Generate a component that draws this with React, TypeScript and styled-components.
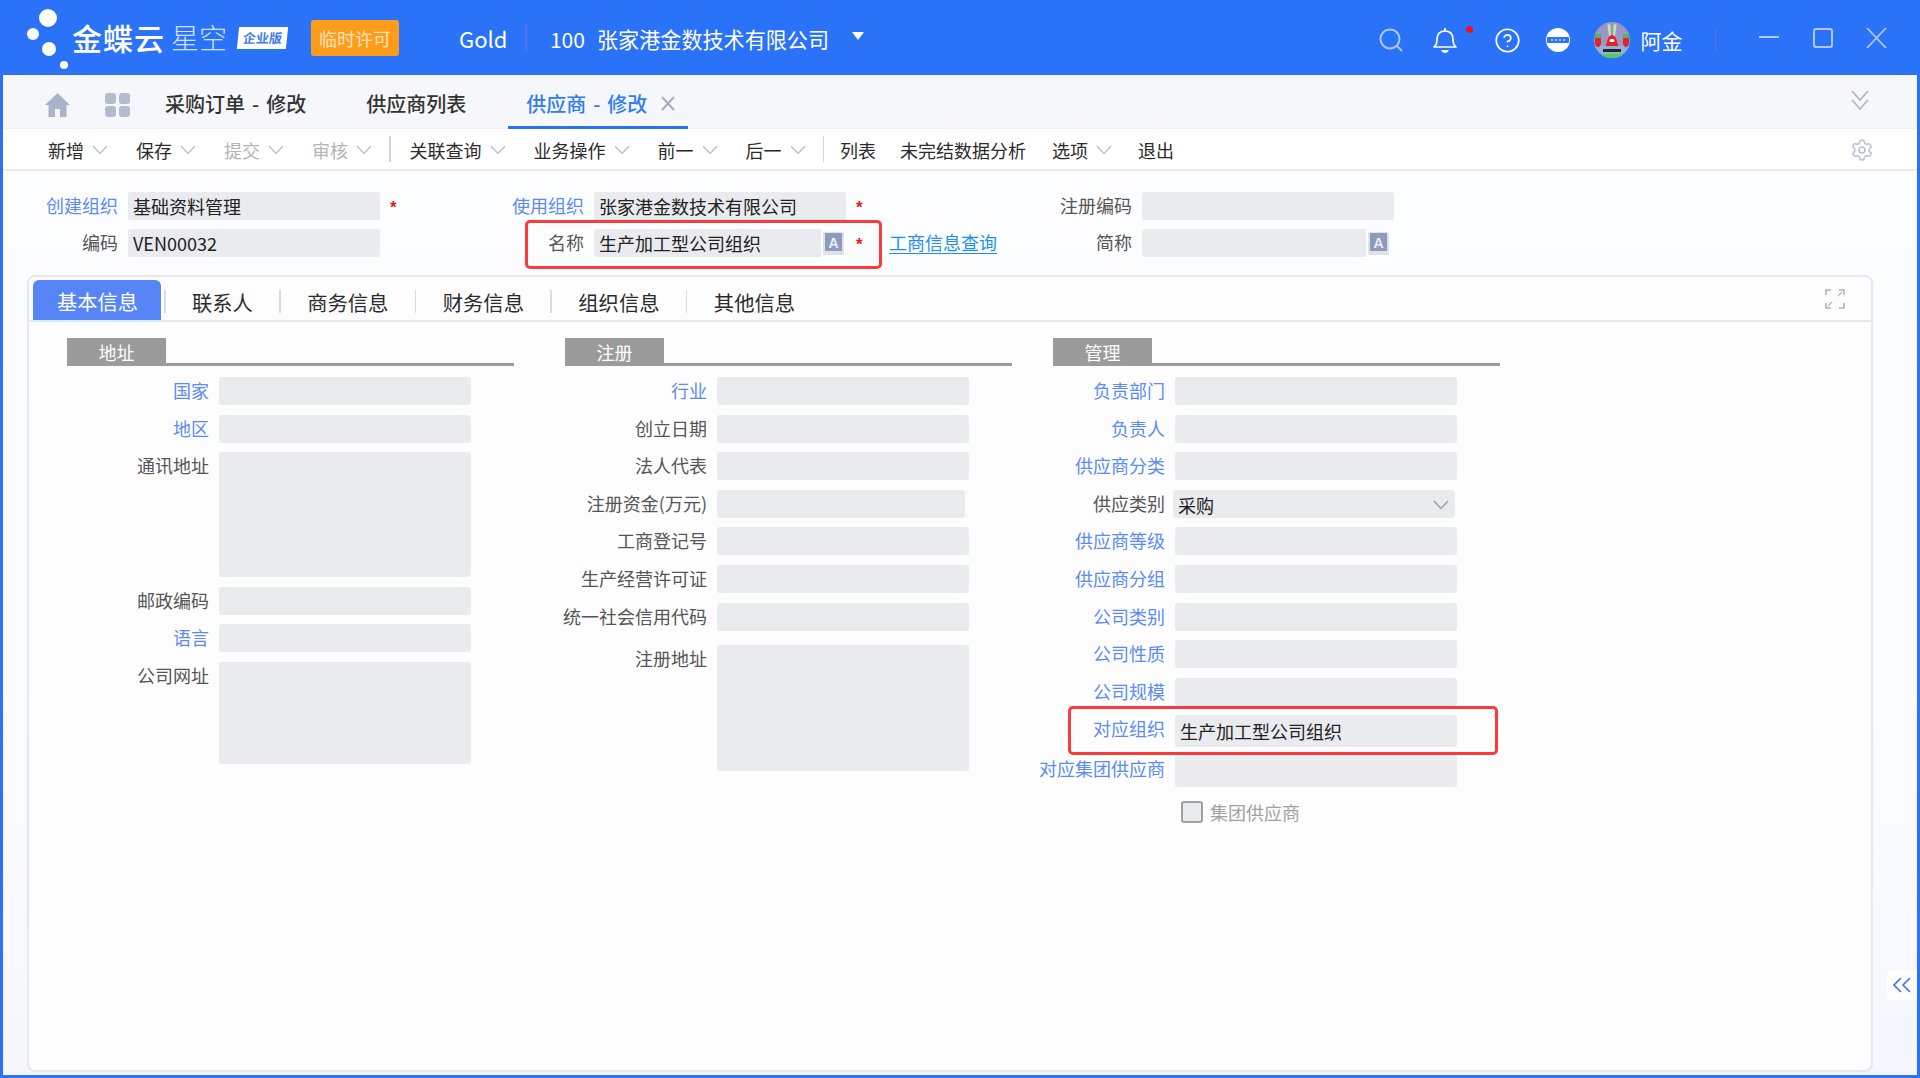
import React from 'react';
import styled, { createGlobalStyle } from 'styled-components';
import { CircleHelp, Settings } from 'lucide-react';

const GlobalStyle = createGlobalStyle`
  html, body {
    margin: 0;
    padding: 0;
    background: #2a72f8;
  }
  * {
    box-sizing: border-box;
  }
  body {
    font-family: "Noto Sans CJK SC", "Noto Sans", "Liberation Sans", sans-serif;
  }
`;

const Page = styled.div`
  width: 1920px;
  height: 1078px;
  display: flex;
  flex-direction: column;
  overflow: hidden;
  background: #2a72f8;
  position: relative;
`;

const Header = styled.header`
  height: 75px;
  flex: none;
  display: flex;
  align-items: center;
  color: #fff;
`;

const LogoMark = styled.svg`
  width: 72px;
  height: 75px;
  flex: none;
`;

const LogoBrand = styled.span`
  font-size: 30px;
  line-height: 36px;
  font-weight: 500;
  width: 99px;
  letter-spacing: 1px;
  white-space: nowrap;
  margin-top: -2px;
`;

const LogoProduct = styled.span`
  font-size: 28px;
  line-height: 36px;
  font-weight: 300;
  width: 67px;
  opacity: 0.78;
  white-space: nowrap;
  margin-top: -2px;
`;

const LogoBadge = styled.span`
  width: 49px;
  height: 22px;
  background: #fff;
  color: #3f7ef0;
  font-size: 13px;
  font-weight: 700;
  line-height: 22px;
  text-align: center;
  transform: skewX(-6deg);
  white-space: nowrap;
`;

const LicenseChip = styled.span`
  width: 88px;
  height: 36px;
  margin-left: 24px;
  background: #ff9c1c;
  border-radius: 3px;
  color: #ffe3bd;
  font-size: 18px;
  line-height: 36px;
  text-align: center;
  white-space: nowrap;
`;

const TenantName = styled.span`
  margin-left: 60px;
  font-size: 22px;
  line-height: 30px;
`;

const HeaderDivider = styled.span<{ $left: number; $right: number }>`
  width: 1.5px;
  height: 25px;
  background: #5e6fe6;
  margin: 0 ${p => p.$right}px 0 ${p => p.$left}px;
  flex: none;
`;

const CompanyName = styled.span`
  font-size: 21.1px;
  line-height: 32px;
  white-space: nowrap;
  margin-top: 2px;
`;

const CompanyCode = styled(CompanyName)`
  margin-right: 12px;
`;

const CaretDown = styled.span`
  width: 0;
  height: 0;
  margin-left: 23px;
  margin-top: -4px;
  border-left: 6.5px solid transparent;
  border-right: 6.5px solid transparent;
  border-top: 8px solid #fff;
`;

const HeaderTools = styled.div`
  margin-left: auto;
  display: flex;
  align-items: center;
  height: 100%;
  padding: 5px 33px 0 0;
`;

const ToolIcon = styled.svg<{ $ml: number; $dim?: boolean }>`
  margin-left: ${p => p.$ml}px;
  flex: none;
  display: block;
  opacity: ${p => (p.$dim ? 0.62 : 1)};
`;

const WindowControls = styled.div`
  display: flex;
  align-items: center;
  margin-top: -5px;
`;

const BellWrap = styled.span`
  position: relative;
  display: block;
  margin-left: 30px;
  height: 26px;
`;

const BellDot = styled.span`
  position: absolute;
  left: 33px;
  top: -1px;
  width: 7px;
  height: 7px;
  border-radius: 50%;
  background: #f30f0f;
`;

const HelpIcon = styled(CircleHelp)`
  margin-left: 37px;
  flex: none;
`;

const UserName = styled.span`
  margin-left: 11px;
  font-size: 21px;
  line-height: 30px;
  white-space: nowrap;
`;

const Body = styled.div`
  flex: 1;
  min-height: 0;
  margin: 0 3px 3px;
  background: linear-gradient(#fcfdff, #fbfcff 60%, #f5f7fd);
  display: flex;
  flex-direction: column;
  position: relative;
`;

const TabBar = styled.nav`
  height: 54px;
  flex: none;
  background: #f5f7fb;
  display: flex;
  align-items: stretch;
  padding-left: 42px;
`;

const NavIcons = styled.div`
  display: flex;
  align-items: center;
  gap: 35px;
  margin-right: 17px;
  padding-top: 6px;
`;

const PageTab = styled.div<{ $active?: boolean }>`
  padding: 6px ${p => (p.$active ? 13 : 18)}px 0 18px;
  margin-right: 24px;
  display: flex;
  align-items: center;
  gap: 14px;
  font-size: 20px;
  line-height: 28px;
  font-weight: 500;
  word-spacing: 2.5px;
  white-space: nowrap;
  color: ${p => (p.$active ? '#2f7cf6' : '#333')};
  border-bottom: 3px solid ${p => (p.$active ? '#2a72f8' : 'transparent')};
`;

const TabClose = styled.svg`
  display: block;
  flex: none;
`;

const CollapseTabs = styled.svg`
  margin-left: auto;
  margin-right: 47px;
  margin-top: 16px;
  flex: none;
`;

const Toolbar = styled.div`
  height: 40px;
  flex: none;
  background: #fff;
  display: flex;
  align-items: center;
  padding: 2px 0 0 45px;
  box-shadow: 0 1px 3px rgba(120, 130, 160, 0.28);
  position: relative;
`;

const ToolItem = styled.div<{ $gap?: number; $disabled?: boolean }>`
  display: flex;
  align-items: center;
  gap: 8px;
  margin-right: ${p => p.$gap ?? 28}px;
  font-size: 18px;
  line-height: 26px;
  white-space: nowrap;
  color: ${p => (p.$disabled ? '#b4b4b4' : '#2b2b2b')};
`;

const ToolSep = styled.span<{ $after: number }>`
  width: 1.5px;
  height: 26px;
  background: #cfd6e4;
  margin-left: -11px;
  margin-right: ${p => p.$after}px;
  margin-top: -2px;
  flex: none;
`;

const ToolGear = styled(Settings)`
  margin-left: auto;
  margin-right: 43px;
  margin-top: -1px;
`;

const TopForm = styled.section`
  position: relative;
  display: grid;
  grid-template-columns: 125px 252px 132px 82px 252px 214px 82px 252px;
  grid-auto-rows: 28px;
  row-gap: 9px;
  padding-top: 23px;
  height: 106px;
  flex: none;
`;

const FieldLabel = styled.label<{ $link?: boolean; $width?: number }>`
  display: flex;
  justify-content: flex-end;
  font-size: 18px;
  line-height: 26px;
  height: 28px;
  padding-right: 10px;
  white-space: nowrap;
  flex: none;
  width: ${p => (p.$width ? `${p.$width}px` : 'auto')};
  color: ${p => (p.$link ? '#5c8bf5' : '#555')};
`;

const InputBox = styled.div<{ $width?: number; $height?: number }>`
  position: relative;
  width: ${p => (p.$width ? `${p.$width}px` : '100%')};
  height: ${p => (p.$height ? `${p.$height}px` : '28px')};
  background: #e9ebef;
  border-radius: 3px;
  padding: 0 5px;
  font-size: 18px;
  line-height: 28px;
  color: #222;
  white-space: nowrap;
  flex: none;
`;

const FormValue = styled(InputBox)`
  padding-top: 2px;
`;

const LangIcon = styled.svg`
  position: absolute;
  right: 0;
  top: 0;
`;

const StarCell = styled.div`
  display: flex;
  align-items: center;
  gap: 27px;
  padding-left: 10px;
`;

const Star = styled.span`
  width: 6px;
  color: #f01414;
  font-family: "Liberation Sans", sans-serif;
  font-size: 17px;
  font-weight: 700;
  line-height: 28px;
  padding-top: 3px;
`;

const InfoLink = styled.a`
  font-size: 18px;
  line-height: 24px;
  color: #1f8fef;
  text-decoration: underline;
  text-underline-offset: 3px;
  white-space: nowrap;
  margin-top: -2px;
`;

const NameHighlight = styled.div`
  position: absolute;
  left: 522px;
  top: 51px;
  width: 357px;
  height: 49px;
  border: 3.5px solid #fb3b3b;
  border-radius: 5px;
  pointer-events: none;
`;

const Panel = styled.section`
  flex: 1;
  min-height: 0;
  margin: 0 44px 3px 24px;
  border: 2px solid #e4e8f1;
  border-radius: 8px;
  background: #fdfdfe;
  display: flex;
  flex-direction: column;
`;

const PanelTabs = styled.div`
  height: 45px;
  flex: none;
  display: flex;
  align-items: flex-end;
  padding-left: 4px;
  border-bottom: 2px solid #e4e8f1;
`;

const PanelTab = styled.div`
  height: 40px;
  padding: 0 26.4px 0 28px;
  font-size: 20.3px;
  line-height: 44px;
  white-space: nowrap;
  position: relative;
  color: #2b2b2b;
  &::before {
    content: "";
    position: absolute;
    left: 0;
    top: 10px;
    bottom: 7px;
    width: 1.5px;
    background: #d6dce8;
  }
`;

const ActiveTab = styled.div`
  height: 40px;
  width: 128px;
  margin-right: 3px;
  padding-left: 24px;
  font-size: 20.3px;
  line-height: 42px;
  white-space: nowrap;
  border-radius: 6px 6px 0 0;
  background: #5585f6;
  color: #fff;
`;

const ExpandIcon = styled.svg`
  margin-left: auto;
  margin-right: 26px;
  align-self: flex-start;
  margin-top: 12px;
`;

const PanelBody = styled.div`
  display: flex;
  padding: 16px 0 0 38px;
  align-items: flex-start;
`;

const Section = styled.div<{ $mr: number }>`
  width: 447px;
  flex: none;
  margin-right: ${p => p.$mr}px;
  position: relative;
`;

const SectionHead = styled.div`
  height: 28px;
  border-bottom: 3px solid #9b9b9b;
  margin-bottom: 11px;
`;

const SectionTitle = styled.div`
  width: 99px;
  height: 28px;
  background: #9b9b9b;
  color: #fff;
  font-size: 18px;
  line-height: 28px;
  text-align: center;
`;

const FieldList = styled.div`
  display: flex;
  flex-direction: column;
  gap: 9.6px;
`;

const FieldRow = styled.div<{ $mt?: number }>`
  display: flex;
  align-items: flex-start;
  margin-top: ${p => p.$mt ?? 0}px;
`;

const SelectBox = styled(FormValue)`
  margin-left: -2px;
  display: flex;
  align-items: center;
  justify-content: space-between;
  padding-right: 6px;
`;

const OrgHighlight = styled.div`
  position: absolute;
  left: 15px;
  top: 368px;
  width: 430px;
  height: 49px;
  border: 3.5px solid #fb3b3b;
  border-radius: 5px;
  pointer-events: none;
`;

const CheckRow = styled.div`
  display: flex;
  align-items: center;
  gap: 7px;
  margin: 12px 0 0 128px;
  font-size: 18px;
  line-height: 26px;
  color: #a2a2a2;
`;

const CheckBox = styled.span`
  width: 22px;
  height: 22px;
  border: 2.5px solid #a0a0a0;
  border-radius: 3px;
  background: #e9ebef;
  flex: none;
`;

const SideHandle = styled.div`
  position: absolute;
  right: 0;
  top: 895px;
  width: 30px;
  height: 30px;
  background: #fff;
  border-radius: 6px 0 0 6px;
  display: flex;
  align-items: center;
  padding-left: 6px;
`;

const Chevron: React.FC<{ color?: string }> = ({ color = '#b9c1d3' }) => (
  <svg width="16" height="10" viewBox="0 0 16 10" fill="none">
    <path d="M1 1l7 7.500L15 1" stroke={color} strokeWidth="1.5" />
  </svg>
);

const LangGlyph: React.FC = () => (
  <LangIcon width="25" height="28" viewBox="0 0 25 28">
    <rect width="25" height="28" fill="#fcfdff" />
    <rect x="2" y="3" width="21" height="23" rx="1" fill="#dfe2ea" />
    <rect x="4" y="4" width="17" height="18" fill="#8f9bbd" />
    <text x="12.500" y="18.500" textAnchor="middle" fontSize="14" fontWeight="700" fill="#e9ecf4" fontFamily="Liberation Sans">
      A
    </text>
  </LangIcon>
);

const KrabsAvatar: React.FC = () => (
  <ToolIcon $ml={24} width="36" height="36" viewBox="0 0 36 36">
    <defs>
      <clipPath id="avatarClip">
        <circle cx="18" cy="18" r="18" />
      </clipPath>
    </defs>
    <g clipPath="url(#avatarClip)">
      <rect width="36" height="36" fill="#9b96c6" />
      <rect y="24" width="36" height="12" fill="#8fb3cf" />
      <path d="M3 32h30v4H3z" fill="#58c95c" />
      <path d="M14.500 2c1.500 0 2 1 2 3l.5 9h-2l-1.500-9c0-2 0-3 1-3zM21.500 2c-1.500 0-2 1-2 3l-.5 9h2l1.500-9c0-2 0-3-1-3z" fill="#bfe8a4" />
      <path d="M18 13c3 0 5 4 6 11H12c1-7 3-11 6-11z" fill="#e2232a" />
      <rect x="15.500" y="17" width="5" height="3" rx="1.500" fill="#fff" />
      <path d="M1 15h6v7l-2 3H3l-2-3zM29 15h6v7l-2 3h-2l-2-3z" fill="#d9272d" />
      <path d="M1 12h6v4H1zM29 12h6v4h-6z" fill="#4fb658" />
      <path d="M9 27h18v3H9z" fill="#23232c" />
    </g>
  </ToolIcon>
);

type FieldDef = {
  label: string;
  link?: boolean;
  height?: number;
  width?: number;
  mt?: number;
  value?: string;
  select?: boolean;
};

const addressFields: FieldDef[] = [
  { label: '国家', link: true },
  { label: '地区', link: true },
  { label: '通讯地址', height: 125 },
  { label: '邮政编码' },
  { label: '语言', link: true },
  { label: '公司网址', height: 102 },
];

const registerFields: FieldDef[] = [
  { label: '行业', link: true },
  { label: '创立日期' },
  { label: '法人代表' },
  { label: '注册资金(万元)', width: 248 },
  { label: '工商登记号' },
  { label: '生产经营许可证' },
  { label: '统一社会信用代码' },
  { label: '注册地址', height: 126, mt: 5 },
];

const manageFields: FieldDef[] = [
  { label: '负责部门', link: true },
  { label: '负责人', link: true },
  { label: '供应商分类', link: true },
  { label: '供应类别', select: true, value: '采购' },
  { label: '供应商等级', link: true },
  { label: '供应商分组', link: true },
  { label: '公司类别', link: true },
  { label: '公司性质', link: true },
  { label: '公司规模', link: true },
  { label: '对应组织', link: true, height: 32, value: '生产加工型公司组织' },
  { label: '对应集团供应商', link: true, height: 32, mt: -2 },
];

const Fields: React.FC<{ fields: FieldDef[]; labelWidth: number; inputWidth: number }> = ({
  fields,
  labelWidth,
  inputWidth,
}) => (
  <FieldList>
    {fields.map(f => (
      <FieldRow key={f.label} $mt={f.mt}>
        <FieldLabel $link={f.link} $width={labelWidth}>
          {f.label}
        </FieldLabel>
        {f.select ? (
          <SelectBox $width={inputWidth}>
            {f.value}
            <Chevron color="#98a0b0" />
          </SelectBox>
        ) : (
          <FormValue $width={f.width ?? inputWidth} $height={f.height}>
            {f.value}
          </FormValue>
        )}
      </FieldRow>
    ))}
  </FieldList>
);

const toolGroupA = [
  { text: '新增' },
  { text: '保存' },
  { text: '提交', disabled: true },
  { text: '审核', disabled: true },
];
const toolGroupB = ['关联查询', '业务操作', '前一', '后一'];

export default function App() {
  return (
    <Page>
      <GlobalStyle />
      <Header>
        <LogoMark viewBox="0 0 72 75" fill="#fff">
          <circle cx="48" cy="18" r="9" />
          <circle cx="33" cy="34" r="6" />
          <circle cx="49" cy="49" r="7" />
          <circle cx="64" cy="65" r="4" />
        </LogoMark>
        <LogoBrand>金蝶云</LogoBrand>
        <LogoProduct>星空</LogoProduct>
        <LogoBadge>企业版</LogoBadge>
        <LicenseChip>临时许可</LicenseChip>
        <TenantName>Gold</TenantName>
        <HeaderDivider $left={18} $right={23} />
        <CompanyCode>100</CompanyCode>
        <CompanyName>张家港金数技术有限公司</CompanyName>
        <CaretDown />
        <HeaderTools>
          <ToolIcon $ml={0} $dim width="24" height="24" viewBox="0 0 24 24" fill="none" stroke="#fff" strokeWidth="2">
            <circle cx="11" cy="11" r="9.5" />
            <path d="M18 18l5 5" />
          </ToolIcon>
          <BellWrap>
            <ToolIcon $ml={0} width="24" height="26" viewBox="0 0 24 26" fill="none" stroke="#fff" strokeWidth="1.7">
              <path d="M1 20h22c-2-2-3-3-3-8 0-5-3-8-8-8s-8 3-8 8c0 5-1 6-3 8z" strokeLinejoin="round" />
              <path d="M12 1v3" />
              <path d="M8 23h8c-1 2-2 3-4 3s-3-1-4-3z" fill="#fff" stroke="none" />
            </ToolIcon>
            <BellDot />
          </BellWrap>
          <HelpIcon size={27} color="#fff" strokeWidth={1.5} />
          <ToolIcon $ml={25} width="24" height="24" viewBox="0 0 24 24">
            <circle cx="12" cy="12" r="12" fill="#fff" />
            <rect x="1" y="9" width="22" height="6" rx="1" fill="#2a72f8" />
            <circle cx="6" cy="12" r="1" fill="#cfe0ff" />
            <circle cx="10" cy="12" r="1" fill="#cfe0ff" />
            <circle cx="14" cy="12" r="1" fill="#cfe0ff" />
            <circle cx="18" cy="12" r="1" fill="#cfe0ff" />
          </ToolIcon>
          <KrabsAvatar />
          <UserName>阿金</UserName>
          <HeaderDivider $left={32} $right={32} />
          <WindowControls>
            <ToolIcon $ml={11} $dim width="20" height="20" viewBox="0 0 20 20" fill="none" stroke="#fff" strokeWidth="2">
              <path d="M0 9h20" />
            </ToolIcon>
            <ToolIcon $ml={34} $dim width="20" height="20" viewBox="0 0 20 20" fill="none" stroke="#fff" strokeWidth="2">
              <rect x="1" y="1" width="18" height="18" rx="2" />
            </ToolIcon>
            <ToolIcon $ml={33} $dim width="21" height="20" viewBox="0 0 21 20" fill="none" stroke="#fff" strokeWidth="1.8">
              <path d="M1 0l19 20M20 0L1 20" />
            </ToolIcon>
          </WindowControls>
        </HeaderTools>
      </Header>
      <Body>
        <TabBar>
          <NavIcons>
            <svg width="25" height="24" viewBox="0 0 25 24" fill="#aab4c9">
              <path d="M12.500 0L25 12h-3.500v12H15v-8h-5v8H3.500V12H0z" />
            </svg>
            <svg width="25" height="24" viewBox="0 0 25 24" fill="#b3bccf">
              <rect width="11" height="11" rx="3" />
              <rect x="14" width="11" height="11" rx="3" />
              <rect y="13" width="11" height="11" rx="3" />
              <rect x="14" y="13" width="11" height="11" rx="3" />
            </svg>
          </NavIcons>
          <PageTab>采购订单 - 修改</PageTab>
          <PageTab>供应商列表</PageTab>
          <PageTab $active>
            供应商 - 修改
            <TabClose width="14" height="15" viewBox="0 0 14 15" fill="none" stroke="#a3adc2" strokeWidth="2">
              <path d="M1 1l12 13M13 1L1 14" />
            </TabClose>
          </PageTab>
          <CollapseTabs width="20" height="20" viewBox="0 0 20 20" fill="none" stroke="#a9b3c9" strokeWidth="1.6">
            <path d="M2 0l8 9 8-9" />
            <path d="M2 9l8 9 8-9" />
          </CollapseTabs>
        </TabBar>
        <Toolbar>
          {toolGroupA.map(t => (
            <ToolItem key={t.text} $disabled={t.disabled}>
              {t.text}
              <Chevron />
            </ToolItem>
          ))}
          <ToolSep $after={19} />
          {toolGroupB.map(t => (
            <ToolItem key={t}>
              {t}
              <Chevron />
            </ToolItem>
          ))}
          <ToolSep $after={16} />
          <ToolItem $gap={24}>列表</ToolItem>
          <ToolItem $gap={26}>未完结数据分析</ToolItem>
          <ToolItem $gap={26}>
            选项
            <Chevron />
          </ToolItem>
          <ToolItem>退出</ToolItem>
          <ToolGear size={24} color="#b7c0d2" strokeWidth={1.5} />
        </Toolbar>
        <TopForm>
          <FieldLabel $link>创建组织</FieldLabel>
          <InputBox>基础资料管理</InputBox>
          <StarCell>
            <Star>*</Star>
          </StarCell>
          <FieldLabel $link>使用组织</FieldLabel>
          <InputBox>张家港金数技术有限公司</InputBox>
          <StarCell>
            <Star>*</Star>
          </StarCell>
          <FieldLabel>注册编码</FieldLabel>
          <InputBox />

          <FieldLabel>编码</FieldLabel>
          <InputBox>VEN00032</InputBox>
          <div />
          <FieldLabel>名称</FieldLabel>
          <InputBox>
            生产加工型公司组织
            <LangGlyph />
          </InputBox>
          <StarCell>
            <Star>*</Star>
            <InfoLink>工商信息查询</InfoLink>
          </StarCell>
          <FieldLabel>简称</FieldLabel>
          <InputBox $width={249}>
            <LangGlyph />
          </InputBox>
          <NameHighlight />
        </TopForm>
        <Panel>
          <PanelTabs>
            <ActiveTab>基本信息</ActiveTab>
            <PanelTab>联系人</PanelTab>
            <PanelTab>商务信息</PanelTab>
            <PanelTab>财务信息</PanelTab>
            <PanelTab>组织信息</PanelTab>
            <PanelTab>其他信息</PanelTab>
            <ExpandIcon width="20" height="20" viewBox="0 0 20 20" fill="none" stroke="#a9b3c9" strokeWidth="1.6">
              <path d="M1 6V1h5M19 6V1h-5M1 14v5h5M19 14v5h-5" />
              <path d="M13 7l4-4M7 13l-4 4" strokeWidth="1.2" />
            </ExpandIcon>
          </PanelTabs>
          <PanelBody>
            <Section $mr={51}>
              <SectionHead>
                <SectionTitle>地址</SectionTitle>
              </SectionHead>
              <Fields fields={addressFields} labelWidth={152} inputWidth={252} />
            </Section>
            <Section $mr={41}>
              <SectionHead>
                <SectionTitle>注册</SectionTitle>
              </SectionHead>
              <Fields fields={registerFields} labelWidth={152} inputWidth={252} />
            </Section>
            <Section $mr={0}>
              <SectionHead>
                <SectionTitle>管理</SectionTitle>
              </SectionHead>
              <Fields fields={manageFields} labelWidth={122} inputWidth={282} />
              <CheckRow>
                <CheckBox />
                集团供应商
              </CheckRow>
              <OrgHighlight />
            </Section>
          </PanelBody>
        </Panel>
        <SideHandle>
          <svg width="18" height="16" viewBox="0 0 18 16" fill="none" stroke="#3d72f0" strokeWidth="1.6">
            <path d="M8 1L1 8l7 7M17 1l-7 7 7 7" />
          </svg>
        </SideHandle>
      </Body>
    </Page>
  );
}
